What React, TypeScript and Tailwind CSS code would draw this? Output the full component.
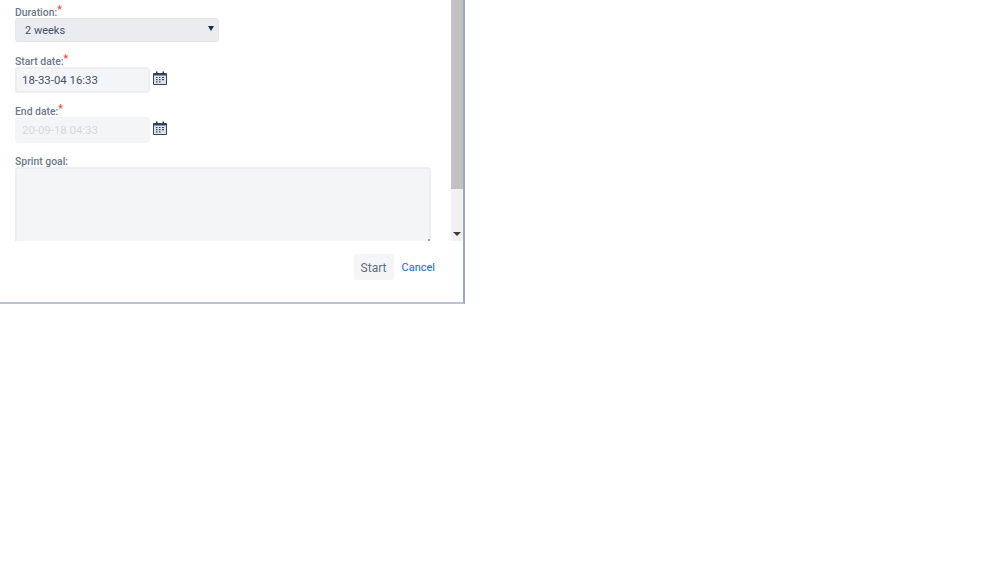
import React from "react";

function CalIcon() {
  return (
    <svg width="14" height="14" viewBox="0 0 14 14" className="shrink-0 ml-[3px]">
      <path d="M0.5 2.5H13.5V13.5H0.5Z" fill="#dfe1e6" stroke="#344563" />
      <rect x="1" y="2" width="12" height="2.5" fill="#344563" />
      <rect x="3" y="0.5" width="1.5" height="3" fill="#253858" />
      <rect x="9.5" y="0.5" width="1.5" height="3" fill="#253858" />
      <path d="M3 6.5h1.5M6 6.5h1.5M9 6.5h2M3 8.7h1.5M6 8.7h1.5M9 8.7h2M3 10.9h1.5M6 10.9h1.5" stroke="#344563" strokeWidth="1.2" />
    </svg>
  );
}

function Label({ text, required, className }: { text: string; required?: boolean; className?: string }) {
  return (
    <div className={`text-[10.4px] leading-[17px] font-medium text-[#6b778c] h-[14px] ${className ?? ""}`}>
      {text}
      {required && <span className="text-[#e5493a] relative -top-[3px]">*</span>}
    </div>
  );
}

function DateField({ value, disabled }: { value: string; disabled?: boolean }) {
  return (
    <div className="flex items-center">
      <div
        className={`w-[135px] h-[26px] rounded-[3px] border-2 pl-[5px] text-[11.4px] leading-[22px] ${
          disabled ? "bg-[#f4f5f7] border-[#f4f5f7] text-[#d5d9e0]" : "bg-[#f4f5f7] border-[#eceef1] text-[#42526e]"
        }`}
      >
        {value}
      </div>
      <div className="-mt-[4px] flex">
        <CalIcon />
      </div>
    </div>
  );
}

export default function App() {
  return (
    <div className="w-[999px] h-[562px] bg-white font-['Roboto','Noto_Sans',sans-serif]">
      <div className="w-[465px] h-[304px] border-r-2 border-r-[#9aa8c6] border-b-2 border-b-[#bcc3d4] flex flex-col">
        <div className="h-[241px] flex">
          <div className="w-[451px] pl-[15px] overflow-hidden">
            <Label text="Duration:" required className="mt-[4px]" />
            <div className="w-[204px] h-[24px] rounded-[3px] bg-[#ebecf0] border border-[#e4e6ea] pl-[9px] pr-[4px] flex items-center justify-between text-[11px] text-[#42526e]">
              <span className="mt-[2px]">2 weeks</span>
              <span className="w-0 h-0 border-x-[3px] border-x-transparent border-t-[5px] border-t-[#172b4d] -mt-[3px]" />
            </div>
            <Label text="Start date:" required className="mt-[11px]" />
            <DateField value="18-33-04 16:33" />
            <Label text="End date:" required className="mt-[10px]" />
            <DateField value="20-09-18 04:33" disabled />
            <Label text="Sprint goal:" className="mt-[10px]" />
            <div className="w-[416px] h-[74px] rounded-t-[3px] bg-[#f4f5f7] border-2 border-b-0 border-[#eceef1] flex items-end justify-end">
              <span className="w-[2px] h-[2px] bg-[#9aa0a8] -mr-[1px]" />
            </div>
          </div>
          <div className="w-[12px] h-full bg-[#f1f1f1] flex flex-col items-center">
            <div className="w-full h-[189px] bg-[#c1c1c1]" />
            <div className="flex-1" />
            <span className="w-0 h-0 border-x-[4px] border-x-transparent border-t-[4px] border-t-[#3a3a3a] mb-[5px]" />
          </div>
        </div>
        <div className="flex items-center justify-end pr-[28px] pt-[13px]">
          <div className="h-[26px] w-[40px] rounded-[3px] bg-[#f4f5f7] text-[#5e6c84] text-[12px] leading-[28px] text-center">Start</div>
          <div className="ml-[8px] mt-[3px] text-[11px] text-[#1a66d6]">Cancel</div>
        </div>
      </div>
    </div>
  );
}
